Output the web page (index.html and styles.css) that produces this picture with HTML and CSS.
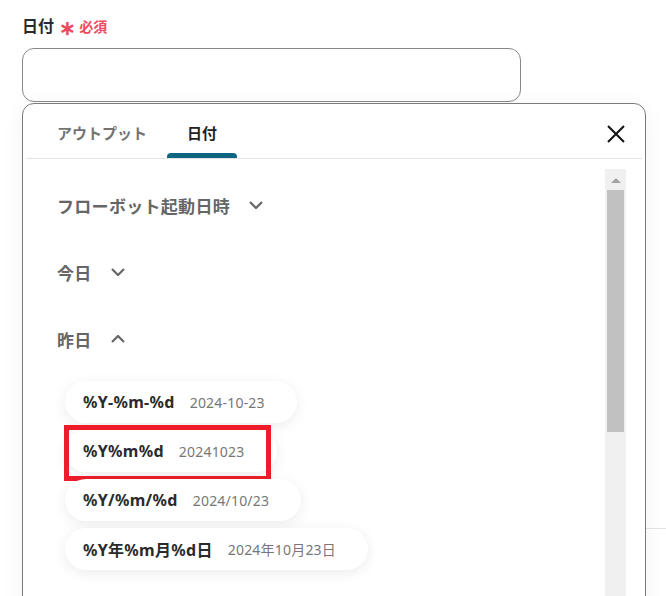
FILE: index.html
```html
<!DOCTYPE html>
<html lang="ja">
<head>
  <meta charset="UTF-8" />
  <title>日付</title>
  <link rel="stylesheet" href="styles.css">
</head>
<body>

<div class="field">
  <div class="field-label">日付 <span class="required"><span class="star">∗</span>必須</span></div>
  <div class="field-input"></div>
  <div class="section-divider"></div>

  <!-- dropdown panel -->
  <div class="picker">
    <div class="picker-head">
      <div class="tab">アウトプット</div>
      <div class="tab active">日付</div>
      <button class="close" aria-label="閉じる">
        <svg width="20" height="20" viewBox="0 0 20 20"><path d="M2 2 L18 18 M18 2 L2 18" stroke="#111" stroke-width="2" fill="none"/></svg>
      </button>
    </div>

    <div class="picker-body">
      <div class="picker-list">
        <div class="group-title">フローボット起動日時
          <svg class="chev" width="14" height="8" viewBox="0 0 14 8"><path d="M1 1 L7 7 L13 1" stroke="#666" stroke-width="2.2" fill="none"/></svg>
        </div>
        <div class="group-title">今日
          <svg class="chev" width="14" height="8" viewBox="0 0 14 8"><path d="M1 1 L7 7 L13 1" stroke="#666" stroke-width="2.2" fill="none"/></svg>
        </div>
        <div class="group-title">昨日
          <svg class="chev" width="14" height="8" viewBox="0 0 14 8"><path d="M1 7 L7 1 L13 7" stroke="#666" stroke-width="2.2" fill="none"/></svg>
        </div>

        <div class="pills">
          <div class="pill"><span class="key">%Y-%m-%d</span><span class="val">2024-10-23</span></div>
          <div class="pill marked"><span class="key">%Y%m%d</span><span class="val">20241023</span></div>
          <div class="pill"><span class="key">%Y/%m/%d</span><span class="val">2024/10/23</span></div>
          <div class="pill"><span class="key">%Y年%m月%d日</span><span class="val">2024年10月23日</span></div>
        </div>
      </div>

      <div class="scrollbar">
        <div class="scroll-up"></div>
        <div class="scroll-thumb"></div>
      </div>
    </div>
  </div>
</div>

</body>
</html>
```

FILE: styles.css
```css
html, body {
  height: 596px;
  overflow: hidden;
}
body {
  margin: 0;
  background: #fff;
  font-family: "Noto Sans", "Noto Sans CJK JP", sans-serif;
  color: #333;
}
.field {
  position: relative;
  padding: 16px 0 0 22px;
}
.field-label {
  height: 20px;
  font-size: 16px;
  font-weight: bold;
  line-height: 20px;
  color: #2b2b2b;
}
.required {
  color: #ef4a5f;
  font-size: 14px;
  margin-left: 1px;
}
.star {
  font-size: 20px;
  line-height: 0;
  vertical-align: -3px;
  margin-right: 3px;
}
.field-input {
  width: 497px;
  height: 52px;
  margin-top: 12px;
  border: 1px solid #888;
  border-radius: 12px;
}
.section-divider {
  margin: 426px 0 0 300px;
  border-top: 1px solid #e4e4e4;
}

/* dropdown panel */
.picker {
  position: absolute;
  left: 22px;
  top: 103px;
  width: 622px;
  height: 560px;
  background: #fff;
  border: 1px solid #7a7a7a;
  border-radius: 12px;
  box-shadow: 0 4px 24px rgba(0, 0, 0, 0.05);
}
.picker-head {
  display: flex;
  height: 54px;
  margin: 0 3px;
  padding-left: 11px;
  border-bottom: 1px solid #e3e3e3;
}
.tab {
  position: relative;
  padding: 19px 20px 0;
  font-size: 15px;
  font-weight: bold;
  line-height: 20px;
  color: #747474;
}
.tab.active {
  color: #222;
}
.tab.active::after {
  content: "";
  position: absolute;
  left: 0;
  right: 0;
  bottom: 0;
  height: 5px;
  background: #0f6580;
  border-radius: 4px 4px 0 0;
}
.close {
  margin: 20px 16px 0 auto;
  width: 20px;
  height: 20px;
  padding: 0;
  border: none;
  background: none;
  align-self: flex-start;
}
.close svg {
  display: block;
}

.picker-body {
  display: flex;
}
.picker-list {
  flex: 1;
  padding: 34px 0 0 34px;
}
.group-title {
  display: flex;
  align-items: center;
  height: 24px;
  margin-bottom: 43px;
  font-size: 17px;
  font-weight: bold;
  letter-spacing: 0.3px;
  color: #666;
}
.group-title:nth-child(3) {
  margin-bottom: 30px;
}
.chev {
  margin-left: 19px;
}
.pills {
  display: flex;
  flex-direction: column;
  align-items: flex-start;
  gap: 7px;
  margin-left: 8px;
}
.pill {
  position: relative;
  display: flex;
  align-items: center;
  height: 42px;
  padding: 0 32px 0 18px;
  border-radius: 21px;
  background: #fff;
  box-shadow: 0 3px 14px rgba(0, 0, 0, 0.08);
}
.pill .key {
  font-size: 16px;
  font-weight: bold;
  letter-spacing: 0.3px;
  color: #2b2b2b;
}
.pill .val {
  margin-left: 15px;
  font-size: 14px;
  letter-spacing: 0.2px;
  color: #777;
}
.pill.marked::after {
  content: "";
  position: absolute;
  left: -1px;
  top: -5px;
  width: 197px;
  height: 46px;
  border: 5px solid #ee1c2a;
}

.scrollbar {
  position: relative;
  width: 21px;
  height: 440px;
  margin: 10px 19px 0 0;
  background: #f0f0f0;
}
.scroll-up {
  width: 0;
  height: 0;
  margin: 9px auto 0;
  border-left: 5px solid transparent;
  border-right: 5px solid transparent;
  border-bottom: 5px solid #a3a3a3;
}
.scroll-thumb {
  width: 17px;
  height: 242px;
  margin: 7px auto 0;
  background: #c1c1c1;
}
```
